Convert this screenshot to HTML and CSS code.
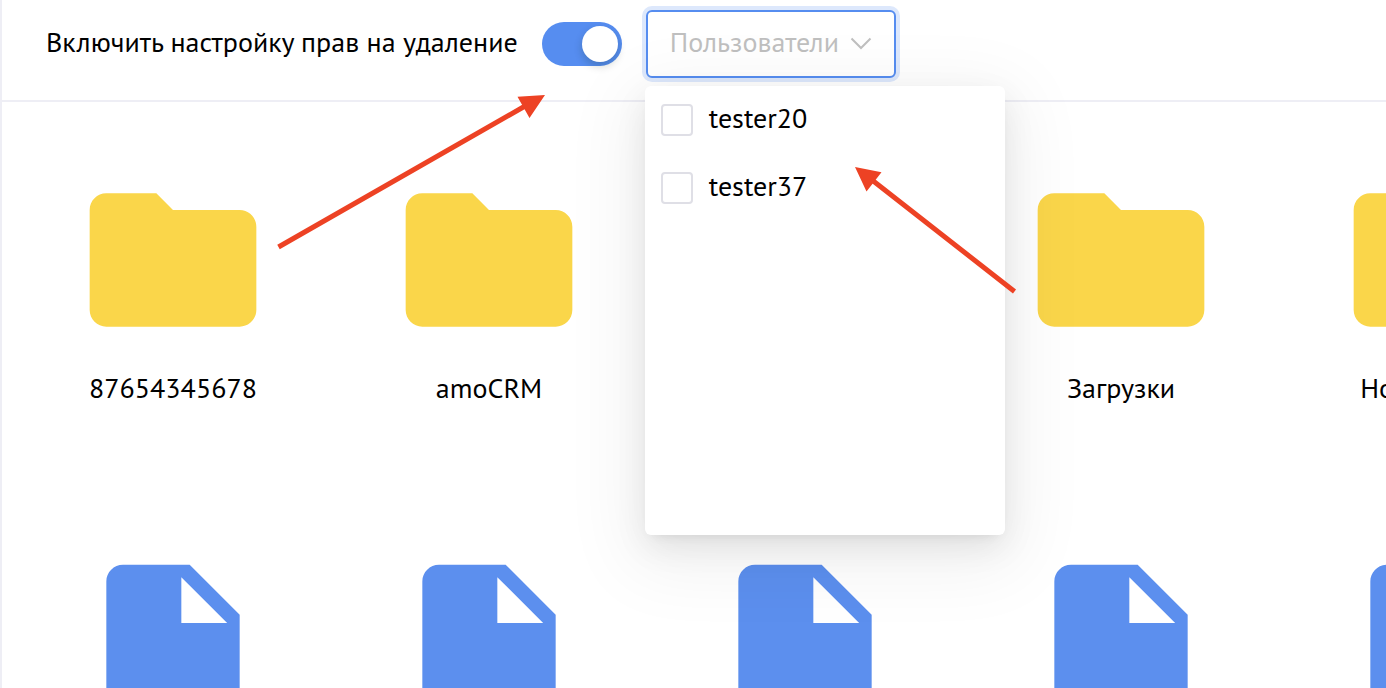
FILE: index.html
```html
<!DOCTYPE html>
<html lang="ru">
<head>
<meta charset="utf-8">
<meta name="viewport" content="width=device-width, initial-scale=1">
<title>Файлы</title>
<link rel="stylesheet" href="styles.css">
</head>
<body>
<svg class="sprite" aria-hidden="true">
  <symbol id="folder" viewBox="0 0 24 24"><path d="M10 4H4c-1.1 0-2 .9-2 2v12c0 1.1.9 2 2 2h16c1.1 0 2-.9 2-2V8c0-1.1-.9-2-2-2h-8l-2-2z"/></symbol>
  <symbol id="file" viewBox="0 0 24 24"><path d="M6 2c-1.1 0-2 .9-2 2v16c0 1.1.9 2 2 2h12c1.1 0 2-.9 2-2V8l-6-6H6zm7 7V3.500L18.500 9H13z"/></symbol>
</svg>
<div class="page">
  <header class="toolbar">
    <label class="toolbar-label" for="rights">Включить настройку прав на удаление</label>
    <input class="switch" type="checkbox" role="switch" id="rights" checked>
    <div class="picker">
      <button class="picker-button" type="button" aria-haspopup="true" aria-expanded="true">
        <span class="picker-text">Пользователи</span>
        <svg class="chevron" viewBox="0 0 22 14" aria-hidden="true"><path d="M1.500 1.500L11 11l9.500-9.500"/></svg>
      </button>
      <div class="menu">
        <label class="option"><input class="check" type="checkbox"><span class="option-text">tester20</span></label>
        <label class="option"><input class="check" type="checkbox"><span class="option-text">tester37</span></label>
      </div>
    </div>
  </header>
  <main class="files">
    <div class="tile folder"><svg class="icon"><use href="#folder"/></svg><span>87654345678</span></div>
    <div class="tile folder"><svg class="icon"><use href="#folder"/></svg><span>amoCRM</span></div>
    <div class="tile folder"><svg class="icon"><use href="#folder"/></svg></div>
    <div class="tile folder"><svg class="icon"><use href="#folder"/></svg><span>Загрузки</span></div>
    <div class="tile folder"><svg class="icon"><use href="#folder"/></svg><span>Новая папка</span></div>
    <div class="tile file"><svg class="icon"><use href="#file"/></svg></div>
    <div class="tile file"><svg class="icon"><use href="#file"/></svg></div>
    <div class="tile file"><svg class="icon"><use href="#file"/></svg></div>
    <div class="tile file"><svg class="icon"><use href="#file"/></svg></div>
    <div class="tile file"><svg class="icon"><use href="#file"/></svg></div>
  </main>
</div>
<svg class="arrows" width="1040" height="310" aria-hidden="true">
  <path class="shaft" d="M278.500 247L526 105.500M1014.500 291.500L872 180"/>
  <path class="head" d="M545 95l-27.500 1.800L529.500 118zM855 167l26.500 5.200L866.500 191.500z"/>
</svg>
</body>
</html>
```

FILE: styles.css
```css
* {
  box-sizing: border-box;
}

body {
  margin: 0;
  height: 100vh;
  overflow: hidden;
  background: #fff;
  color: #000;
  font: 28px/36px "PT Sans", Roboto, "Noto Sans", sans-serif;
}

.sprite {
  position: absolute;
  width: 0;
  height: 0;
}

.page {
  height: 100vh;
  overflow: hidden;
  border-left: 2px solid #eeeef5;
}

.toolbar {
  display: flex;
  align-items: center;
  gap: 24px;
  padding: 10px 44px 22px;
  border-bottom: 2px solid #eeeef5;
}

.toolbar-label {
  white-space: nowrap;
}

.toolbar-label,
.picker-text,
.option-text {
  padding-bottom: 4px;
}

.switch {
  appearance: none;
  flex: none;
  display: flex;
  justify-content: flex-end;
  width: 80px;
  height: 44px;
  margin: 0;
  padding: 4px;
  border-radius: 22px;
  background: #568df0;
}

.switch::before {
  content: "";
  width: 36px;
  height: 36px;
  border-radius: 50%;
  background: #fff;
  box-shadow: 0 4px 8px rgba(0, 35, 11, 0.2);
}

.picker {
  position: relative;
}

.picker-button {
  display: flex;
  align-items: center;
  justify-content: space-between;
  width: 250px;
  height: 68px;
  padding: 0 22px;
  border: 2px solid #568df0;
  border-radius: 6px;
  background: #fff;
  box-shadow: 0 0 0 4px #dde8fc;
  color: #bfbfbf;
  font: inherit;
}

.chevron {
  width: 22px;
  height: 14px;
  fill: none;
  stroke: #bfbfbf;
  stroke-width: 2;
}

.menu {
  position: absolute;
  z-index: 1;
  top: 76px;
  left: -1px;
  width: 360px;
  height: 449px;
  border-radius: 6px;
  background: #fff;
  box-shadow: 0 6px 12px -8px rgba(0, 0, 0, 0.12), 0 12px 32px rgba(0, 0, 0, 0.08), 0 18px 72px 16px rgba(0, 0, 0, 0.06);
}

.option {
  display: flex;
  align-items: center;
  gap: 16px;
  height: 68px;
  padding: 0 16px;
}

.check {
  appearance: none;
  width: 32px;
  height: 32px;
  margin: 0;
  border: 2px solid #dfdfe6;
  border-radius: 4px;
  background: #fff;
}

.files {
  display: grid;
  grid-template-columns: repeat(5, 316px);
  grid-auto-rows: 388px;
  padding: 58px 13px 0;
}

.tile {
  display: flex;
  flex-direction: column;
  align-items: center;
  gap: 10px;
}

.icon {
  width: 200px;
  height: 200px;
}

.folder {
  fill: #fad64a;
}

.file {
  fill: #5c8fee;
}

.arrows {
  position: absolute;
  z-index: 2;
  top: 0;
  left: 0;
  pointer-events: none;
}

.shaft {
  fill: none;
  stroke: #ed4224;
  stroke-width: 5;
}

.head {
  fill: #ed4224;
}
```
